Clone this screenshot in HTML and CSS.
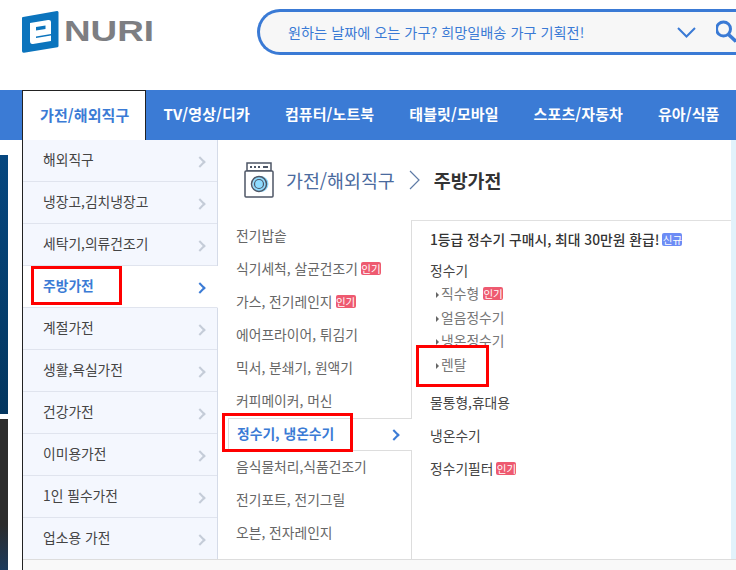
FILE: index.html
```html
<!DOCTYPE html>
<html lang="ko">
  <head>
    <meta charset="UTF-8" />
    <title>에누리 가격비교</title>
    <link rel="stylesheet" href="styles.css">
  </head>
  <body>
    <header class="header">
      <a class="logo">
        <svg class="logo-mark" width="37" height="43" viewBox="0 0 37 43">
          <path d="M1 7 35 1Q36.500 0.800 36.500 2.500V36Q36.500 37 35.500 37.200L2 42.700Q0 43 0 41V8Q0 7.200 1 7Z" fill="#0b74bd" />
          <path d="M8 13 26 10Q29 9.500 29 12V24L14 26.500V28L29 25.500V31L11 34Q8 34.500 8 31Z" fill="#fff" />
          <path d="M14 17V20.500L23.500 19V15.500Z" fill="#0b74bd" />
        </svg>
        <span class="logo-text">NURI</span>
      </a>
      <div class="search">
        <span class="search-text">원하는 날짜에 오는 가구? 희망일배송 가구 기획전!</span>
        <svg class="search-arrow" width="19" height="11" viewBox="0 0 19 11">
          <path d="M1 1 9.500 9.500 18 1" fill="none" stroke="#3a7ad5" stroke-width="2" />
        </svg>
        <svg class="search-icon" width="20" height="26" viewBox="0 0 20 26">
          <circle cx="7.500" cy="10" r="7" fill="none" stroke="#3a7ad5" stroke-width="3" />
          <path d="M12.500 15.500 20 22.500" fill="none" stroke="#3a7ad5" stroke-width="3.500" />
        </svg>
      </div>
    </header>

    <nav class="nav">
      <a class="nav-item active">가전/해외직구</a>
      <a class="nav-item">TV/영상/디카</a>
      <a class="nav-item">컴퓨터/노트북</a>
      <a class="nav-item">태블릿/모바일</a>
      <a class="nav-item">스포츠/자동차</a>
      <a class="nav-item">유아/식품</a>
    </nav>

    <div class="main">
      <div class="banners">
        <div class="banner banner-blue"></div>
        <div class="banner banner-dark"></div>
      </div>
      <div class="menu">
        <div class="menu-body">
          <ul class="cat-list">
            <li class="cat-item">해외직구</li>
            <li class="cat-item">냉장고,김치냉장고</li>
            <li class="cat-item">세탁기,의류건조기</li>
            <li class="cat-item active">주방가전</li>
            <li class="cat-item">계절가전</li>
            <li class="cat-item">생활,욕실가전</li>
            <li class="cat-item">건강가전</li>
            <li class="cat-item">이미용가전</li>
            <li class="cat-item">1인 필수가전</li>
            <li class="cat-item">업소용 가전</li>
          </ul>
          <div class="content">
            <div class="crumb">
              <svg class="crumb-icon" width="30" height="36" viewBox="0 0 30 36">
                <rect x="3" y="1" width="24" height="8" fill="#fff" stroke="#4d5666" stroke-width="1.500" />
                <path d="M6 5h2M10 5h2M14 5h2M19 5h5" stroke="#4d5666" stroke-width="2" />
                <rect x="1" y="9" width="28" height="26" rx="1" fill="#fff" stroke="#4d5666" stroke-width="1.500" />
                <circle cx="16.500" cy="22" r="8" fill="#8fdcff" />
                <circle cx="15" cy="22" r="7.500" fill="none" stroke="#4d5666" stroke-width="1.500" />
                <circle cx="15" cy="22" r="4.500" fill="none" stroke="#4d5666" stroke-width="1.200" />
              </svg>
              <span class="crumb-parent">가전/해외직구</span>
              <svg class="crumb-sep" width="11" height="20" viewBox="0 0 11 20">
                <path d="M1 1 10 10 1 19" fill="none" stroke="#5f7ba6" stroke-width="1.200" />
              </svg>
              <strong class="crumb-current">주방가전</strong>
            </div>
            <div class="columns">
              <ul class="sub-list">
                <li class="sub-item">전기밥솥</li>
                <li class="sub-item">식기세척, 살균건조기<span class="badge hot">인기</span></li>
                <li class="sub-item">가스, 전기레인지<span class="badge hot">인기</span></li>
                <li class="sub-item">에어프라이어, 튀김기</li>
                <li class="sub-item">믹서, 분쇄기, 원액기</li>
                <li class="sub-item">커피메이커, 머신</li>
                <li class="sub-item active">정수기, 냉온수기</li>
                <li class="sub-item">음식물처리,식품건조기</li>
                <li class="sub-item">전기포트, 전기그릴</li>
                <li class="sub-item">오븐, 전자레인지</li>
              </ul>
              <div class="detail">
                <p class="detail-title">1등급 정수기 구매시, 최대 30만원 환급!<span class="badge new">신규</span></p>
                <p class="group-title">정수기</p>
                <ul class="leaf-list">
                  <li class="leaf">직수형<span class="badge hot">인기</span></li>
                  <li class="leaf">얼음정수기</li>
                  <li class="leaf">냉온정수기</li>
                  <li class="leaf">렌탈</li>
                </ul>
                <p class="group-title">물통형,휴대용</p>
                <p class="group-title">냉온수기</p>
                <p class="group-title">정수기필터<span class="badge hot">인기</span></p>
              </div>
            </div>
          </div>
          <div class="side-strip"></div>
        </div>
        <div class="menu-foot"></div>
      </div>
    </div>

    <div class="mark mark-cat"></div>
    <div class="mark mark-sub"></div>
    <div class="mark mark-leaf"></div>
  </body>
</html>
```

FILE: styles.css
```css
* {
  margin: 0;
  padding: 0;
  box-sizing: border-box;
}
html,
body {
  height: 570px;
  overflow: hidden;
}
body {
  position: relative;
  font-family: "Noto Sans CJK KR", "Noto Sans", sans-serif;
  background-color: #fff;
  color: #333;
}
ul {
  list-style: none;
}
.header {
  display: flex;
  height: 90px;
  padding-left: 22px;
}
.logo {
  display: flex;
  flex: none;
  width: 235px;
  height: 43px;
  margin-top: 10px;
}
.logo-mark {
  flex: none;
}
.logo-text {
  display: inline-block;
  margin: 4px 0 0 5px;
  font-family: "Liberation Sans", sans-serif;
  font-size: 29px;
  line-height: 34px;
  font-weight: 700;
  color: #7d7e82;
  transform: scaleX(1.27);
  transform-origin: left center;
}
.search {
  display: flex;
  flex: none;
  align-items: center;
  width: 479px;
  height: 46px;
  margin-top: 9px;
  padding-left: 28px;
  background-color: #f7f7f7;
  border: 3px solid #3a7ad5;
  border-right: none;
  border-radius: 23px 0 0 23px;
}
.search-text {
  width: 389px;
  font-size: 14.2px;
  color: #3a7ad5;
  white-space: nowrap;
}
.search-icon {
  margin-left: 20px;
}
.nav {
  display: flex;
  height: 50px;
  padding-left: 22px;
  background-color: #3b7bd5;
}
.nav-item {
  padding: 0 17.5px;
  font-size: 15px;
  letter-spacing: 0.1px;
  line-height: 48px;
  font-weight: 700;
  color: #fff;
  white-space: nowrap;
}
.nav-item.active {
  flex: none;
  width: 124px;
  padding: 0 17px;
  background-color: #fff;
  color: #3b7bd5;
  border: 1px solid #222;
  border-bottom: none;
}
.main {
  display: flex;
  height: 430px;
}
.banners {
  flex: none;
  width: 22px;
  padding-top: 15px;
}
.banner {
  width: 8px;
}
.banner-blue {
  height: 259px;
  margin-bottom: 5px;
  background: linear-gradient(#06477f, #03365f);
}
.banner-dark {
  height: 151px;
  background: linear-gradient(#2c2c2c 70%, #1c3a5c);
}
.menu {
  display: flex;
  flex-direction: column;
  flex: 1;
  border-left: 1px solid #222;
}
.menu-body {
  display: flex;
  height: 419px;
}
.menu-foot {
  height: 11px;
  background-color: #f9f9f9;
  border-top: 1px solid #ddd;
}
.cat-list {
  flex: none;
  width: 195px;
  background-color: #f4f7fe;
  border-right: 1px solid #d5dbe8;
}
.cat-item {
  position: relative;
  height: 42px;
  padding-left: 20px;
  font-size: 13.8px;
  line-height: 39px;
  color: #444;
  border-bottom: 1px solid #e0e4ee;
}
.cat-item:last-child {
  border-bottom: none;
}
.cat-item::after {
  content: "";
  position: absolute;
  top: 18px;
  right: 13px;
  width: 6px;
  height: 6px;
  border-top: 2px solid #c5ccd8;
  border-right: 2px solid #c5ccd8;
  transform: rotate(45deg);
}
.cat-item.active {
  width: 195px;
  background-color: #fff;
  color: #3b7bd5;
  font-weight: 700;
  border-right: 1px solid #fff;
}
.cat-item.active::after {
  border-color: #3b7bd5;
}
.content {
  flex: 1;
  min-width: 0;
}
.crumb {
  display: flex;
  align-items: center;
  height: 80px;
  padding: 0 0 0 26px;
}
.crumb-parent {
  margin-left: 12px;
  font-size: 18.4px;
  color: #4a6a9e;
}
.crumb-sep {
  margin-left: 14px;
}
.crumb-current {
  margin-left: 14px;
  font-size: 18.4px;
  color: #333;
}
.columns {
  display: flex;
  height: 339px;
}
.sub-list {
  flex: none;
  width: 193px;
  padding-left: 10px;
}
.sub-item {
  position: relative;
  height: 33px;
  padding-left: 8px;
  font-size: 13.8px;
  line-height: 31px;
  color: #666;
  white-space: nowrap;
}
.sub-item.active {
  width: 184px;
  padding-left: 8px;
  background-color: #fff;
  color: #3b7bd5;
  font-weight: 700;
  line-height: 29px;
  border: 1px solid #ddd;
  border-right: none;
}
.sub-item.active::after {
  content: "";
  position: absolute;
  top: 12px;
  right: 14px;
  width: 6px;
  height: 6px;
  border-top: 2px solid #3b7bd5;
  border-right: 2px solid #3b7bd5;
  transform: rotate(45deg);
}
.detail {
  flex: 1;
  padding: 1px 0 0 18px;
  border-top: 1px solid #e0e0e0;
  border-left: 1px solid #ddd;
}
.detail-title {
  height: 33px;
  font-size: 13.8px;
  line-height: 34px;
  font-weight: 500;
  color: #333;
  white-space: nowrap;
}
.group-title {
  height: 33px;
  font-size: 13.8px;
  line-height: 31px;
  color: #444;
}
.leaf-list {
  margin: -5px 0 10px;
}
.leaf {
  position: relative;
  height: 23.5px;
  padding-left: 11px;
  font-size: 13.8px;
  line-height: 21.5px;
  color: #777;
}
.leaf .badge {
  margin-left: 4px;
}
.leaf::before {
  content: "";
  position: absolute;
  top: 9px;
  left: 6px;
  border-left: 3px solid #666;
  border-top: 3px solid transparent;
  border-bottom: 3px solid transparent;
}
.badge {
  display: inline-block;
  width: 20px;
  height: 13px;
  margin-left: 3px;
  font-size: 10.5px;
  line-height: 13px;
  font-weight: 400;
  text-align: center;
  color: #fff;
  border-radius: 2px;
  vertical-align: 1px;
}
.badge.hot {
  background-color: #ee5a70;
}
.badge.new {
  background-color: #6c8cf5;
}
.side-strip {
  flex: none;
  width: 5px;
  background-color: #e2f2fb;
}
.mark {
  position: absolute;
  border: 3px solid #f00;
}
.mark-cat {
  left: 31px;
  top: 266px;
  width: 91px;
  height: 39px;
}
.mark-sub {
  left: 222px;
  top: 413px;
  width: 131px;
  height: 39px;
}
.mark-leaf {
  left: 416px;
  top: 345px;
  width: 73px;
  height: 42px;
}
```
